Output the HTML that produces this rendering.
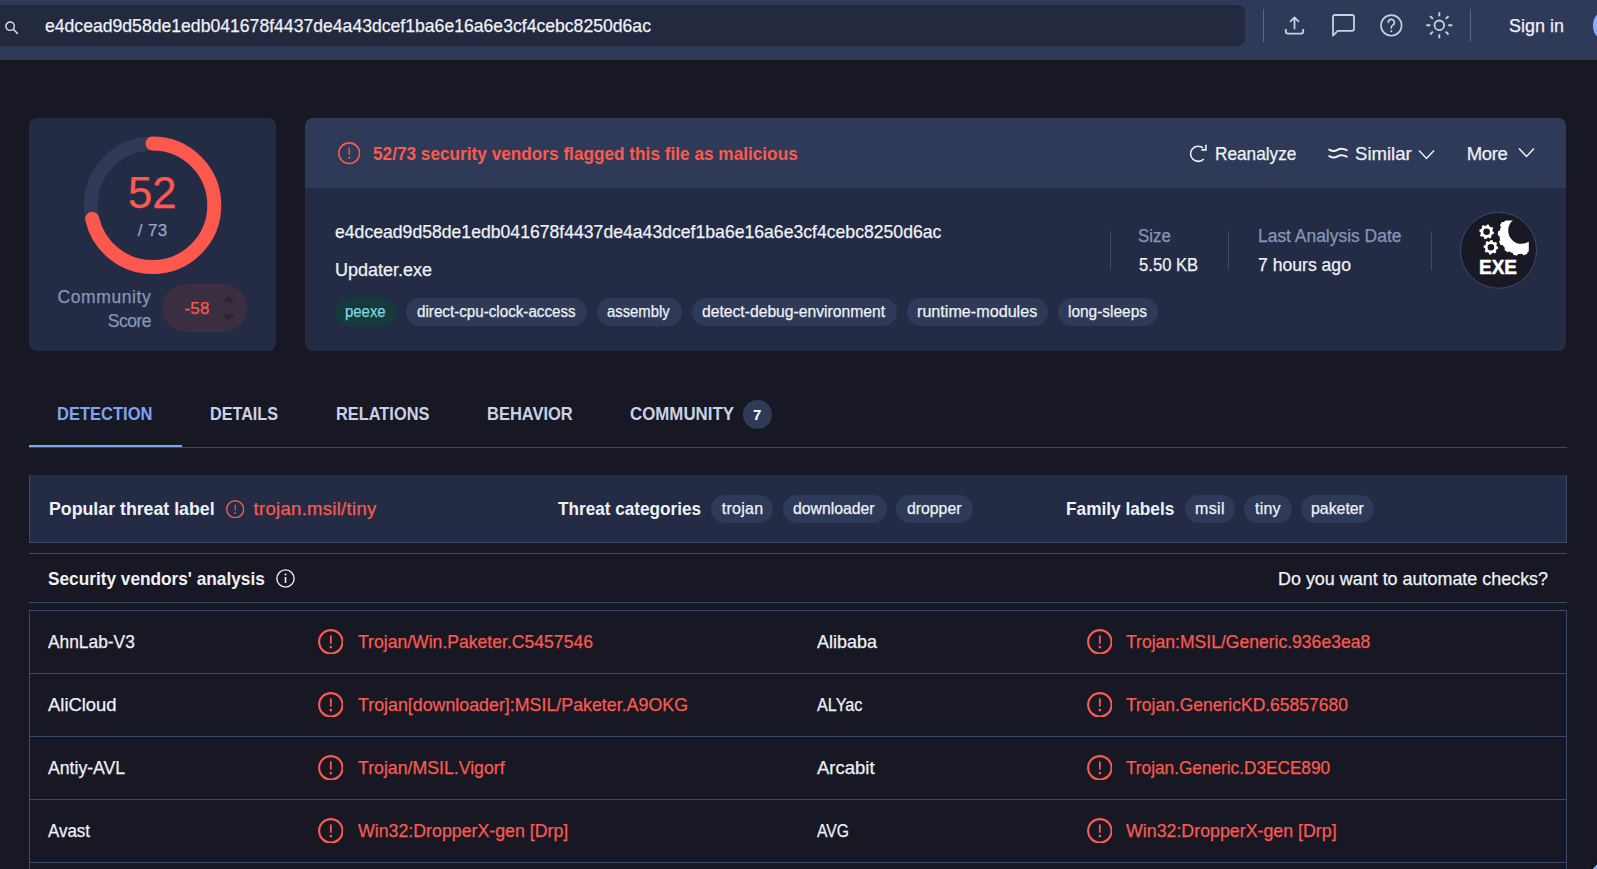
<!DOCTYPE html>
<html><head><meta charset="utf-8"><title>VirusTotal</title><style>
html,body{margin:0;padding:0}
body{width:1597px;height:869px;overflow:hidden;background:#181824;position:relative;font-family:"Liberation Sans",sans-serif}
.b,.ic{position:absolute}
.t{position:absolute;white-space:nowrap;line-height:1;transform-origin:0 0}
.r{-webkit-text-stroke:0.25px currentColor}
</style></head>
<body>
<div class="b" style="left:0;top:0;width:1597px;height:60px;background:#2e3a58"></div>
<div class="b" style="left:-12px;top:5px;width:1257px;height:41px;background:#232a40;border-radius:7px"></div>
<div class="b" style="left:1263px;top:9px;width:1px;height:33px;background:#56668c"></div>
<div class="b" style="left:1470px;top:9px;width:1px;height:33px;background:#56668c"></div>
<svg class="ic" style="left:4px;top:20px;width:16px;height:16px" viewBox="0 0 16 16"><circle cx="6.1" cy="6.2" r="4.2" fill="none" stroke="#dfe4ee" stroke-width="1.4"/><path d="M9.3 9.3l4.2 4.2" stroke="#dfe4ee" stroke-width="1.5" stroke-linecap="round"/></svg>
<svg class="ic" style="left:1282px;top:13px;width:24px;height:24px" viewBox="0 0 24 24"><path d="M3.8 16V18.6Q3.8 20.6 5.8 20.6H19.2Q21.2 20.6 21.2 18.6V16M12.5 16.3V4.6M8.1 8.8L12.5 4.4L16.9 8.8" fill="none" stroke="#c9d1e3" stroke-width="1.8" stroke-linejoin="round"/></svg>
<svg class="ic" style="left:1331px;top:13px;width:26px;height:26px" viewBox="0 0 26 26"><path d="M2 22.6V4Q2 2 4 2H21Q23 2 23 4V15.8Q23 17.8 21 17.8H6.6Z" fill="none" stroke="#c9d1e3" stroke-width="1.8" stroke-linejoin="round"/></svg>
<svg class="ic" style="left:1378px;top:13px;width:26px;height:26px" viewBox="0 0 26 26"><circle cx="13.3" cy="12.4" r="10.3" fill="none" stroke="#c9d1e3" stroke-width="1.6"/><path d="M10.3 9.4a3.05 3.05 0 1 1 4.5 2.7c-.9.5-1.5 1.1-1.5 2.1v.9" fill="none" stroke="#c9d1e3" stroke-width="1.6" stroke-linecap="round"/><circle cx="13.3" cy="18.2" r="1" fill="#c9d1e3"/></svg>
<svg class="ic" style="left:1425px;top:11px;width:28px;height:28px" viewBox="0 0 28 28"><circle cx="14.3" cy="14.3" r="4.8" fill="none" stroke="#c9d1e3" stroke-width="1.8"/><g stroke="#c9d1e3" stroke-width="1.9" stroke-linecap="butt"><path d="M14.3 1.3v4M14.3 23.3v4M1.3 14.3h4M23.3 14.3h4M5.1 5.1l2.8 2.8M20.7 20.7l2.8 2.8M5.1 23.5l2.8-2.8M20.7 7.9l2.8-2.8"/></g></svg>
<div class="b" style="left:1592.9px;top:9.2px;width:32.6px;height:32.6px;border-radius:50%;background:#89acf8"></div>
<div class="b" style="left:29px;top:118px;width:247px;height:233px;background:#232b45;border-radius:8px"></div>
<svg class="ic" style="left:82px;top:135px;width:141px;height:141px" viewBox="0 0 141 141"><circle cx="70.5" cy="70.3" r="61.8" fill="none" stroke="#2e3a58" stroke-width="14"/><circle cx="70.5" cy="70.3" r="61.8" fill="none" stroke="#fc584e" stroke-width="14" stroke-linecap="round" stroke-dasharray="277 1000" transform="rotate(-90 70.5 70.3)"/></svg>
<div class="b" style="left:162px;top:284px;width:85px;height:48px;border-radius:24px;background:#3a2e40"></div>
<svg class="ic" style="left:220px;top:294px;width:17px;height:29px" viewBox="0 0 17 29"><path d="M1.6 8.4L8.5 1.1l6.9 7.3z" fill="#2b2636"/><path d="M1.6 19.9L8.5 27.2l6.9-7.3z" fill="#2b2636"/></svg>
<div class="b" style="left:305px;top:118px;width:1261px;height:233px;background:#232b45;border-radius:8px;overflow:hidden"><div style="position:absolute;left:0;top:0;right:0;height:70px;background:#2e3a58"></div></div>
<svg class="ic" style="left:338.1px;top:142.2px;width:22.4px;height:22.4px" viewBox="0 0 24 24"><circle cx="12" cy="12" r="11.10" fill="none" stroke="#fa5a4f" stroke-width="1.7"/><path d="M12 6.6v6.4" stroke="#fa5a4f" stroke-width="1.39" stroke-linecap="round"/><circle cx="12" cy="16.9" r="1.05" fill="#fa5a4f"/></svg>
<svg class="ic" style="left:1187px;top:142px;width:22px;height:22px" viewBox="0 0 22 22"><path d="M16.09 5.98A7.6 7.6 0 1 0 16.76 16.98" fill="none" stroke="#eef1f7" stroke-width="1.6"/><path d="M18.9 2.8V7.9H14.4" fill="none" stroke="#eef1f7" stroke-width="1.6"/></svg>
<svg class="ic" style="left:1327px;top:145px;width:22px;height:15px" viewBox="0 0 22 15"><path d="M2.3 4.6Q6.5 7.4 10.5 4.9T19.7 5.2M2.3 11.1Q6.5 13.9 10.5 11.4T19.7 11.7" fill="none" stroke="#eef1f7" stroke-width="1.9" stroke-linecap="round"/></svg>
<svg class="ic" style="left:1418px;top:149px;width:17px;height:11px" viewBox="0 0 17 11"><path d="M1 1.5l7.5 8 7.5-8" fill="none" stroke="#eef1f7" stroke-width="1.5"/></svg>
<svg class="ic" style="left:1518px;top:147px;width:17px;height:11px" viewBox="0 0 17 11"><path d="M1 1.5l7.5 8 7.5-8" fill="none" stroke="#eef1f7" stroke-width="1.5"/></svg>
<div class="b" style="left:1109.5px;top:231px;width:1px;height:39px;background:#3e4a68"></div>
<div class="b" style="left:1228px;top:231px;width:1px;height:39px;background:#3e4a68"></div>
<div class="b" style="left:1431px;top:231px;width:1px;height:39px;background:#3e4a68"></div>
<div class="b" style="left:335.0px;top:298px;width:61.8px;height:28px;border-radius:14px;background:#163a3b"></div>
<div class="b" style="left:406.2px;top:298px;width:180.4px;height:28px;border-radius:14px;background:#2e3a58"></div>
<div class="b" style="left:596.8px;top:298px;width:84.9px;height:28px;border-radius:14px;background:#2e3a58"></div>
<div class="b" style="left:691.8px;top:298px;width:205.5px;height:28px;border-radius:14px;background:#2e3a58"></div>
<div class="b" style="left:907.0px;top:298px;width:141.0px;height:28px;border-radius:14px;background:#2e3a58"></div>
<div class="b" style="left:1058.0px;top:298px;width:99.5px;height:28px;border-radius:14px;background:#2e3a58"></div>
<svg class="ic" style="left:1459px;top:211px;width:79px;height:79px" viewBox="0 0 79 79">
<defs><clipPath id="bgc"><path d="M21 13 L40 9.6 L69.8 9.6 L69.8 59 L21 59 Z"/></clipPath></defs>
<circle cx="39.5" cy="39.3" r="38" fill="#191925" stroke="#3a4b6e" stroke-width="1"/>
<g fill="#ffffff" fill-rule="evenodd">
<path d="M33.59 19.63 L33.70 20.58 L34.99 21.23 L34.57 23.28 L33.13 23.37 L32.66 24.21 L32.06 24.96 L32.52 26.33 L30.78 27.48 L29.69 26.53 L28.77 26.79 L27.82 26.90 L27.17 28.19 L25.12 27.77 L25.03 26.33 L24.19 25.86 L23.44 25.26 L22.07 25.72 L20.92 23.98 L21.87 22.89 L21.61 21.97 L21.50 21.02 L20.21 20.37 L20.63 18.32 L22.07 18.23 L22.54 17.39 L23.14 16.64 L22.68 15.27 L24.42 14.12 L25.51 15.07 L26.43 14.81 L27.38 14.70 L28.03 13.41 L30.08 13.83 L30.17 15.27 L31.01 15.74 L31.76 16.34 L33.13 15.88 L34.28 17.62 L33.33 18.71ZM24.30 20.80a3.3 3.3 0 1 0 6.6 0a3.3 3.3 0 1 0 -6.6 0Z"/>
<path d="M37.64 34.57 L37.84 35.49 L39.19 36.00 L38.99 38.04 L37.57 38.28 L37.19 39.14 L36.68 39.93 L37.27 41.24 L35.68 42.55 L34.51 41.70 L33.63 42.04 L32.71 42.24 L32.20 43.59 L30.16 43.39 L29.92 41.97 L29.06 41.59 L28.27 41.08 L26.96 41.67 L25.65 40.08 L26.50 38.91 L26.16 38.03 L25.96 37.11 L24.61 36.60 L24.81 34.56 L26.23 34.32 L26.61 33.46 L27.12 32.67 L26.53 31.36 L28.12 30.05 L29.29 30.90 L30.17 30.56 L31.09 30.36 L31.60 29.01 L33.64 29.21 L33.88 30.63 L34.74 31.01 L35.53 31.52 L36.84 30.93 L38.15 32.52 L37.30 33.69ZM28.60 36.30a3.3 3.3 0 1 0 6.6 0a3.3 3.3 0 1 0 -6.6 0Z"/>
<path clip-path="url(#bgc)" d="M79.57 24.64 L79.37 26.53 L80.72 27.98 L79.63 31.50 L77.69 31.94 L76.79 33.60 L75.74 35.18 L76.26 37.10 L73.67 39.71 L71.74 39.19 L70.17 40.25 L68.51 41.16 L68.08 43.10 L64.57 44.20 L63.11 42.85 L61.22 43.06 L59.33 43.09 L58.05 44.61 L54.42 43.95 L53.76 42.08 L51.99 41.39 L50.30 40.53 L48.46 41.29 L45.56 39.02 L45.84 37.05 L44.60 35.62 L43.50 34.08 L41.52 33.89 L40.00 30.53 L41.16 28.92 L40.73 27.07 L40.47 25.20 L38.81 24.11 L39.02 20.43 L40.80 19.54 L41.28 17.71 L41.92 15.93 L40.95 14.19 L42.85 11.03 L44.84 11.07 L46.11 9.67 L47.51 8.39 L47.46 6.40 L50.61 4.49 L52.35 5.45 L54.13 4.80 L55.96 4.32 L56.84 2.54 L60.52 2.31 L61.62 3.97 L63.49 4.21 L65.34 4.64 L66.95 3.47 L70.31 4.98 L70.51 6.95 L72.06 8.05 L73.49 9.28 L75.46 8.99 L77.74 11.89 L76.99 13.73 L77.86 15.42 L78.55 17.18 L80.43 17.84 L81.10 21.46 L79.59 22.75ZM49.20 19.50a13.3 13.3 0 1 0 26.6 0a13.3 13.3 0 1 0 -26.6 0Z"/>
</g>
</svg>
<div class="b" style="left:29px;top:447px;width:1538px;height:1px;background:#3c4a6a"></div>
<div class="b" style="left:29px;top:445px;width:153px;height:2px;background:#7ea4f2"></div>
<div class="b" style="left:743px;top:400px;width:28.6px;height:28.6px;border-radius:50%;background:#2e3a58"></div>
<div class="b" style="left:29px;top:475px;width:1536px;height:67px;background:#232b45;border:1px solid #3c4a6a;border-top:none"></div>
<svg class="ic" style="left:225.8px;top:499.8px;width:18.4px;height:18.4px" viewBox="0 0 24 24"><circle cx="12" cy="12" r="11.05" fill="none" stroke="#fa5a4f" stroke-width="1.8"/><path d="M12 6.6v6.4" stroke="#fa5a4f" stroke-width="1.48" stroke-linecap="round"/><circle cx="12" cy="16.9" r="1.12" fill="#fa5a4f"/></svg>
<div class="b" style="left:711.0px;top:495px;width:62.0px;height:28px;border-radius:14px;background:#2e3a58"></div>
<div class="b" style="left:783.3px;top:495px;width:103.3px;height:28px;border-radius:14px;background:#2e3a58"></div>
<div class="b" style="left:896.2px;top:495px;width:76.6px;height:28px;border-radius:14px;background:#2e3a58"></div>
<div class="b" style="left:1185.2px;top:495px;width:49.6px;height:28px;border-radius:14px;background:#2e3a58"></div>
<div class="b" style="left:1244.0px;top:495px;width:47.6px;height:28px;border-radius:14px;background:#2e3a58"></div>
<div class="b" style="left:1301.0px;top:495px;width:72.9px;height:28px;border-radius:14px;background:#2e3a58"></div>
<div class="b" style="left:29px;top:553px;width:1538px;height:1px;background:#3c4a6a"></div>
<div class="b" style="left:29px;top:602px;width:1538px;height:1px;background:#3c4a6a"></div>
<svg class="ic" style="left:275.5px;top:568.5px;width:19px;height:19px" viewBox="0 0 19 19"><circle cx="9.5" cy="9.5" r="8.6" fill="none" stroke="#eef1f7" stroke-width="1.4"/><path d="M9.5 8v6" stroke="#eef1f7" stroke-width="1.6"/><circle cx="9.5" cy="5.4" r="1" fill="#eef1f7"/></svg>
<div class="b" style="left:29px;top:610px;width:1536px;height:300px;border:1px solid #3c4a6a"></div>
<div class="b" style="left:29px;top:673px;width:1538px;height:1px;background:#3c4a6a"></div>
<div class="b" style="left:29px;top:736px;width:1538px;height:1px;background:#3c4a6a"></div>
<div class="b" style="left:29px;top:799px;width:1538px;height:1px;background:#3c4a6a"></div>
<div class="b" style="left:29px;top:862px;width:1538px;height:1px;background:#3c4a6a"></div>
<svg class="ic" style="left:317.6px;top:628.5px;width:25.7px;height:25.7px" viewBox="0 0 24 24"><circle cx="12" cy="12" r="10.95" fill="none" stroke="#fa5a4f" stroke-width="2.0"/><path d="M12 6.6v6.4" stroke="#fa5a4f" stroke-width="1.64" stroke-linecap="round"/><circle cx="12" cy="16.9" r="1.24" fill="#fa5a4f"/></svg>
<svg class="ic" style="left:1086.7px;top:628.5px;width:25.7px;height:25.7px" viewBox="0 0 24 24"><circle cx="12" cy="12" r="10.95" fill="none" stroke="#fa5a4f" stroke-width="2.0"/><path d="M12 6.6v6.4" stroke="#fa5a4f" stroke-width="1.64" stroke-linecap="round"/><circle cx="12" cy="16.9" r="1.24" fill="#fa5a4f"/></svg>
<svg class="ic" style="left:317.6px;top:691.5px;width:25.7px;height:25.7px" viewBox="0 0 24 24"><circle cx="12" cy="12" r="10.95" fill="none" stroke="#fa5a4f" stroke-width="2.0"/><path d="M12 6.6v6.4" stroke="#fa5a4f" stroke-width="1.64" stroke-linecap="round"/><circle cx="12" cy="16.9" r="1.24" fill="#fa5a4f"/></svg>
<svg class="ic" style="left:1086.7px;top:691.5px;width:25.7px;height:25.7px" viewBox="0 0 24 24"><circle cx="12" cy="12" r="10.95" fill="none" stroke="#fa5a4f" stroke-width="2.0"/><path d="M12 6.6v6.4" stroke="#fa5a4f" stroke-width="1.64" stroke-linecap="round"/><circle cx="12" cy="16.9" r="1.24" fill="#fa5a4f"/></svg>
<svg class="ic" style="left:317.6px;top:754.5px;width:25.7px;height:25.7px" viewBox="0 0 24 24"><circle cx="12" cy="12" r="10.95" fill="none" stroke="#fa5a4f" stroke-width="2.0"/><path d="M12 6.6v6.4" stroke="#fa5a4f" stroke-width="1.64" stroke-linecap="round"/><circle cx="12" cy="16.9" r="1.24" fill="#fa5a4f"/></svg>
<svg class="ic" style="left:1086.7px;top:754.5px;width:25.7px;height:25.7px" viewBox="0 0 24 24"><circle cx="12" cy="12" r="10.95" fill="none" stroke="#fa5a4f" stroke-width="2.0"/><path d="M12 6.6v6.4" stroke="#fa5a4f" stroke-width="1.64" stroke-linecap="round"/><circle cx="12" cy="16.9" r="1.24" fill="#fa5a4f"/></svg>
<svg class="ic" style="left:317.6px;top:817.5px;width:25.7px;height:25.7px" viewBox="0 0 24 24"><circle cx="12" cy="12" r="10.95" fill="none" stroke="#fa5a4f" stroke-width="2.0"/><path d="M12 6.6v6.4" stroke="#fa5a4f" stroke-width="1.64" stroke-linecap="round"/><circle cx="12" cy="16.9" r="1.24" fill="#fa5a4f"/></svg>
<svg class="ic" style="left:1086.7px;top:817.5px;width:25.7px;height:25.7px" viewBox="0 0 24 24"><circle cx="12" cy="12" r="10.95" fill="none" stroke="#fa5a4f" stroke-width="2.0"/><path d="M12 6.6v6.4" stroke="#fa5a4f" stroke-width="1.64" stroke-linecap="round"/><circle cx="12" cy="16.9" r="1.24" fill="#fa5a4f"/></svg>
<svg class="ic" style="left:1587px;top:857px;width:10px;height:12px" viewBox="0 0 10 12"><path d="M4.2 12.5L10.5 5.8" stroke="#0e0e16" stroke-width="1.6" opacity=".8"/><path d="M5 12.5L10.5 6.6V12.5Z" fill="#89acf8"/></svg>
<span class="t r" id="t0" style="left:45.00px;top:16.00px;font-size:19px;font-weight:400;color:#eef1f7;transform:scaleX(0.9265)">e4dcead9d58de1edb041678f4437de4a43dcef1ba6e16a6e3cf4cebc8250d6ac</span>
<span class="t r" id="t1" style="left:1509.00px;top:16.30px;font-size:19px;font-weight:400;color:#eef1f7;transform:scaleX(0.9442)">Sign in</span>
<span class="t r" id="t2" style="left:127.80px;top:171.30px;font-size:44px;font-weight:400;color:#fa5a4f;transform:scaleX(0.9934)">52</span>
<span class="t r" id="t3" style="left:137.80px;top:222.00px;font-size:17px;font-weight:400;color:#96a5c8;letter-spacing:0.333px">/ 73</span>
<span class="t r" id="t4" style="left:57.60px;top:288.60px;font-size:17.5px;font-weight:400;color:#8796b9;letter-spacing:0.575px">Community</span>
<span class="t r" id="t5" style="left:107.70px;top:313.00px;font-size:17.5px;font-weight:400;color:#8796b9;letter-spacing:-0.450px">Score</span>
<span class="t r" id="t6" style="left:184.40px;top:299.90px;font-size:17px;font-weight:400;color:#fa5a4f;letter-spacing:0.300px">-58</span>
<span class="t" id="t7" style="left:373.00px;top:144.70px;font-size:18px;font-weight:700;color:#fa5a4f;transform:scaleX(0.9562)">52/73 security vendors flagged this file as malicious</span>
<span class="t r" id="t8" style="left:1215.00px;top:145.00px;font-size:18.5px;font-weight:400;color:#eef1f7;transform:scaleX(0.9302)">Reanalyze</span>
<span class="t r" id="t9" style="left:1355.10px;top:145.00px;font-size:18.5px;font-weight:400;color:#eef1f7">Similar</span>
<span class="t r" id="t10" style="left:1466.80px;top:145.00px;font-size:18.5px;font-weight:400;color:#eef1f7;letter-spacing:-0.400px">More</span>
<span class="t r" id="t11" style="left:334.90px;top:221.90px;font-size:19px;font-weight:400;color:#eef1f7;transform:scaleX(0.9271)">e4dcead9d58de1edb041678f4437de4a43dcef1ba6e16a6e3cf4cebc8250d6ac</span>
<span class="t r" id="t12" style="left:334.80px;top:261.00px;font-size:18.5px;font-weight:400;color:#eef1f7;transform:scaleX(0.9718)">Updater.exe</span>
<span class="t r" id="t13" style="left:345.00px;top:304.30px;font-size:16px;font-weight:400;color:#7dd6e2;transform:scaleX(0.9326)">peexe</span>
<span class="t r" id="t14" style="left:417.00px;top:304.30px;font-size:16px;font-weight:400;color:#eef1f7;transform:scaleX(0.9494)">direct-cpu-clock-access</span>
<span class="t r" id="t15" style="left:607.40px;top:304.30px;font-size:16px;font-weight:400;color:#eef1f7;transform:scaleX(0.9271)">assembly</span>
<span class="t r" id="t16" style="left:702.40px;top:304.30px;font-size:16px;font-weight:400;color:#eef1f7;transform:scaleX(0.9800)">detect-debug-environment</span>
<span class="t r" id="t17" style="left:917.00px;top:304.30px;font-size:16px;font-weight:400;color:#eef1f7;transform:scaleX(1.0093)">runtime-modules</span>
<span class="t r" id="t18" style="left:1068.00px;top:304.30px;font-size:16px;font-weight:400;color:#eef1f7;transform:scaleX(0.9655)">long-sleeps</span>
<span class="t r" id="t19" style="left:1138.20px;top:227.00px;font-size:18px;font-weight:400;color:#8796b9;transform:scaleX(0.9366)">Size</span>
<span class="t r" id="t20" style="left:1139.20px;top:256.00px;font-size:18.5px;font-weight:400;color:#eef1f7;transform:scaleX(0.8995)">5.50 KB</span>
<span class="t r" id="t21" style="left:1257.80px;top:227.00px;font-size:18px;font-weight:400;color:#8796b9;transform:scaleX(0.9686)">Last Analysis Date</span>
<span class="t r" id="t22" style="left:1257.80px;top:256.00px;font-size:18.5px;font-weight:400;color:#eef1f7;transform:scaleX(0.9510)">7 hours ago</span>
<span class="t" id="t23" style="left:1479.20px;top:256.60px;font-size:20.5px;font-weight:700;color:#ffffff;transform:scaleX(0.9252);-webkit-text-stroke:0.5px #fff">EXE</span>
<span class="t" id="t24" style="left:57.20px;top:405.10px;font-size:18.5px;font-weight:700;color:#7ea4f2;transform:scaleX(0.8926)">DETECTION</span>
<span class="t" id="t25" style="left:210.40px;top:405.10px;font-size:18.5px;font-weight:700;color:#c9d2e6;transform:scaleX(0.8743)">DETAILS</span>
<span class="t" id="t26" style="left:336.00px;top:405.10px;font-size:18.5px;font-weight:700;color:#c9d2e6;transform:scaleX(0.8850)">RELATIONS</span>
<span class="t" id="t27" style="left:487.10px;top:405.10px;font-size:18.5px;font-weight:700;color:#c9d2e6;transform:scaleX(0.8908)">BEHAVIOR</span>
<span class="t" id="t28" style="left:629.50px;top:405.10px;font-size:18.5px;font-weight:700;color:#c9d2e6;transform:scaleX(0.9115)">COMMUNITY</span>
<span class="t" id="t29" style="left:752.90px;top:406.50px;font-size:15px;font-weight:700;color:#ffffff">7</span>
<span class="t" id="t30" style="left:49.10px;top:500.00px;font-size:18.5px;font-weight:700;color:#eef1f7;transform:scaleX(0.9590)">Popular threat label</span>
<span class="t r" id="t31" style="left:253.60px;top:500.00px;font-size:18.5px;font-weight:400;color:#fa5a4f;letter-spacing:0.293px">trojan.msil/tiny</span>
<span class="t" id="t32" style="left:558.40px;top:500.00px;font-size:18.5px;font-weight:700;color:#eef1f7;transform:scaleX(0.9274)">Threat categories</span>
<span class="t r" id="t33" style="left:721.70px;top:501.00px;font-size:16px;font-weight:400;color:#eef1f7;letter-spacing:0.280px">trojan</span>
<span class="t r" id="t34" style="left:793.40px;top:501.00px;font-size:16px;font-weight:400;color:#eef1f7;transform:scaleX(0.9844)">downloader</span>
<span class="t r" id="t35" style="left:906.90px;top:501.00px;font-size:16px;font-weight:400;color:#eef1f7;transform:scaleX(0.9871)">dropper</span>
<span class="t" id="t36" style="left:1066.40px;top:500.00px;font-size:18.5px;font-weight:700;color:#eef1f7;transform:scaleX(0.9323)">Family labels</span>
<span class="t r" id="t37" style="left:1195.00px;top:501.00px;font-size:16px;font-weight:400;color:#eef1f7;letter-spacing:0.333px">msil</span>
<span class="t r" id="t38" style="left:1255.00px;top:501.00px;font-size:16px;font-weight:400;color:#eef1f7;letter-spacing:0.200px">tiny</span>
<span class="t r" id="t39" style="left:1310.90px;top:501.00px;font-size:16px;font-weight:400;color:#eef1f7;transform:scaleX(0.9911)">paketer</span>
<span class="t" id="t40" style="left:47.60px;top:570.00px;font-size:18.5px;font-weight:700;color:#eef1f7;transform:scaleX(0.9316)">Security vendors' analysis</span>
<span class="t r" id="t41" style="left:1277.90px;top:570.10px;font-size:18.5px;font-weight:400;color:#eef1f7;transform:scaleX(0.9690)">Do you want to automate checks?</span>
<span class="t r" id="t42" style="left:48.40px;top:632.00px;font-size:19px;font-weight:400;color:#eef1f7;transform:scaleX(0.9132)">AhnLab-V3</span>
<span class="t r" id="t43" style="left:357.70px;top:632.00px;font-size:19px;font-weight:400;color:#fa5a4f;transform:scaleX(0.9258)">Trojan/Win.Paketer.C5457546</span>
<span class="t r" id="t44" style="left:817.00px;top:632.00px;font-size:19px;font-weight:400;color:#eef1f7;transform:scaleX(0.9444)">Alibaba</span>
<span class="t r" id="t45" style="left:1126.10px;top:632.00px;font-size:19px;font-weight:400;color:#fa5a4f;transform:scaleX(0.9235)">Trojan:MSIL/Generic.936e3ea8</span>
<span class="t r" id="t46" style="left:48.40px;top:695.00px;font-size:19px;font-weight:400;color:#eef1f7;transform:scaleX(0.9694)">AliCloud</span>
<span class="t r" id="t47" style="left:357.70px;top:695.00px;font-size:19px;font-weight:400;color:#fa5a4f;transform:scaleX(0.9374)">Trojan[downloader]:MSIL/Paketer.A9OKG</span>
<span class="t r" id="t48" style="left:817.00px;top:695.00px;font-size:19px;font-weight:400;color:#eef1f7;transform:scaleX(0.8534)">ALYac</span>
<span class="t r" id="t49" style="left:1126.10px;top:695.00px;font-size:19px;font-weight:400;color:#fa5a4f;transform:scaleX(0.9201)">Trojan.GenericKD.65857680</span>
<span class="t r" id="t50" style="left:48.40px;top:758.00px;font-size:19px;font-weight:400;color:#eef1f7;transform:scaleX(0.9283)">Antiy-AVL</span>
<span class="t r" id="t51" style="left:357.70px;top:758.00px;font-size:19px;font-weight:400;color:#fa5a4f;transform:scaleX(0.9318)">Trojan/MSIL.Vigorf</span>
<span class="t r" id="t52" style="left:817.00px;top:758.00px;font-size:19px;font-weight:400;color:#eef1f7;transform:scaleX(0.9738)">Arcabit</span>
<span class="t r" id="t53" style="left:1126.10px;top:758.00px;font-size:19px;font-weight:400;color:#fa5a4f;transform:scaleX(0.9058)">Trojan.Generic.D3ECE890</span>
<span class="t r" id="t54" style="left:48.40px;top:821.00px;font-size:19px;font-weight:400;color:#eef1f7;transform:scaleX(0.8901)">Avast</span>
<span class="t r" id="t55" style="left:357.70px;top:821.00px;font-size:19px;font-weight:400;color:#fa5a4f;transform:scaleX(0.9349)">Win32:DropperX-gen [Drp]</span>
<span class="t r" id="t56" style="left:817.00px;top:821.00px;font-size:19px;font-weight:400;color:#eef1f7;transform:scaleX(0.8242)">AVG</span>
<span class="t r" id="t57" style="left:1126.10px;top:821.00px;font-size:19px;font-weight:400;color:#fa5a4f;transform:scaleX(0.9364)">Win32:DropperX-gen [Drp]</span>
</body></html>
